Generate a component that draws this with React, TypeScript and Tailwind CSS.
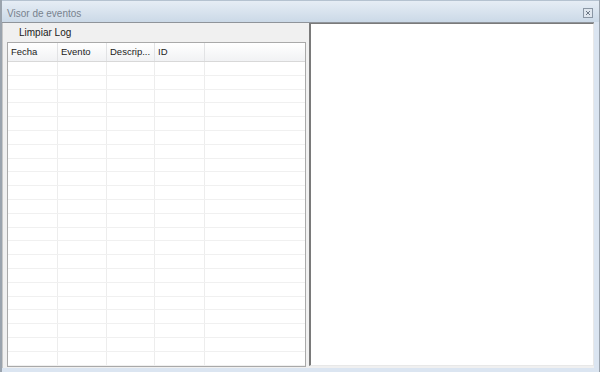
const columns = [
  { label: "Fecha", width: "w-[50px]" },
  { label: "Evento", width: "w-[49px]" },
  { label: "Descrip...", width: "w-[48px]" },
  { label: "ID", width: "w-[50px]" },
];

const rows = Array.from({ length: 22 });

function CloseButton() {
  return (
    <div className="w-[10px] h-[10px] border border-[#8a96a4] bg-[#dfe6ee] flex items-center justify-center">
      <svg width="6" height="6" viewBox="0 0 6 6">
        <path d="M1 1 L5 5 M5 1 L1 5" stroke="#6b7785" strokeWidth="1" />
      </svg>
    </div>
  );
}

function EventTable() {
  return (
    <div className="flex-1 flex flex-col border border-[#a9a9a9] bg-white overflow-hidden">
      {/* header */}
      <div className="flex h-[19px] shrink-0 border-b border-[#d8d8d8] bg-gradient-to-b from-white to-[#f1f2f4]">
        {columns.map((c) => (
          <div
            key={c.label}
            className={`${c.width} shrink-0 border-r border-[#e2e3e5] pl-[3px] flex items-center text-[9.5px] text-[#222]`}
          >
            {c.label}
          </div>
        ))}
        <div className="flex-1" />
      </div>
      {/* rows */}
      <div className="flex-1 overflow-hidden">
        {rows.map((_, i) => (
          <div key={i} className="flex h-[13.8px] border-b border-[#f0f0f0]">
            {columns.map((c) => (
              <div key={c.label} className={`${c.width} shrink-0 border-r border-[#ededed]`} />
            ))}
            <div className="flex-1" />
          </div>
        ))}
      </div>
    </div>
  );
}

export default function App() {
  return (
    <div
      className="w-[600px] h-[372px] flex flex-col bg-[#dbe5f1] border-l-2 border-r border-[#9aa3ad] pr-[5px] pb-[5px] overflow-hidden"
      style={{ fontFamily: '"Liberation Sans", Arial, sans-serif' }}
    >
      {/* title bar */}
      <div className="h-[22px] shrink-0 -mr-[5px] flex items-center justify-between pl-[5px] pr-[6px] pt-[3px] bg-gradient-to-b from-[#e6edf5] to-[#cbd9e7] border-t border-[#b5c2d0]">
        <span className="text-[10px] text-[#78828e]">Visor de eventos</span>
        <CloseButton />
      </div>

      <div className="flex-1 flex bg-[#f0f0f0] border-t border-[#8f949a]">
        {/* left panel */}
        <div className="w-[304px] shrink-0 flex flex-col border-l border-[#c8c8c8] pl-[4px] pb-[1px]">
          <div className="h-[19px] shrink-0 flex items-center pl-[12px] text-[10px] text-[#1a1a1a]">
            Limpiar Log
          </div>
          <EventTable />
        </div>

        {/* splitter */}
        <div className="w-[3px] shrink-0" />

        {/* right panel */}
        <div className="flex-1 flex flex-col pb-[2px]">
          <div className="flex-1 bg-white border-l-2 border-t border-[#7a7a7a] border-r border-r-[#e8e8e8] border-b border-b-[#e8e8e8]" />
        </div>
      </div>
    </div>
  );
}
